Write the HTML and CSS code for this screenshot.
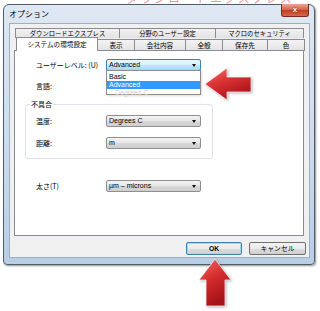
FILE: index.html
```html
<!DOCTYPE html>
<html lang="ja">
<head>
    <meta charset="UTF-8">
    <meta name="viewport" content="width=device-width, initial-scale=1.0">
    <title>オプション</title>
    <link rel="stylesheet" href="styles.css">
</head>
<body>
    <div class="bg-text">ダウンロードエクスプレス</div>

    <div class="window">
        <div class="titlebar">
            <span class="title">オプション</span>
            <span class="close">x</span>
        </div>

        <div class="client">
            <div class="tab-row back">
                <div class="tab w-dl">ダウンロードエクスプレス</div>
                <div class="tab w-user">分野のユーザー設定</div>
                <div class="tab w-macro">マクロのセキュリティ</div>
            </div>
            <div class="tab-row front">
                <div class="tab active w-sys">システムの環境設定</div>
                <div class="tab w-disp">表示</div>
                <div class="tab w-co">会社内容</div>
                <div class="tab w-gen">全般</div>
                <div class="tab w-save">保存先</div>
                <div class="tab w-color">色</div>
            </div>

            <div class="panel">
                <div class="row first">
                    <span class="label">ユーザーレベル: (U)</span>
                    <div class="combo hot">
                        Advanced
                        <div class="dropdown">
                            <div class="item">Basic</div>
                            <div class="item selected">Advanced</div>
                            <div class="item ghost">Degrees C</div>
                        </div>
                    </div>
                </div>
                <div class="row second">
                    <span class="label">言語:</span>
                    <div class="combo"></div>
                </div>

                <div class="group">
                    <span class="group-title">不具合</span>
                    <div class="row">
                        <span class="label">温度:</span>
                        <div class="combo">Degrees C</div>
                    </div>
                    <div class="row gap">
                        <span class="label">距離:</span>
                        <div class="combo">m</div>
                    </div>
                </div>

                <div class="row last">
                    <span class="label">太さ(T)</span>
                    <div class="combo">µm – microns</div>
                </div>
            </div>

            <div class="buttons">
                <div class="btn default">OK</div>
                <div class="btn">キャンセル</div>
            </div>
        </div>
    </div>

    <svg class="arrows" width="320" height="311" viewBox="0 0 320 311">
        <defs>
            <linearGradient id="red-left" x1="0" y1="0" x2="0.6" y2="1">
                <stop offset="0" stop-color="#f77b7b"/>
                <stop offset="0.45" stop-color="#dc3434"/>
                <stop offset="1" stop-color="#a8121a"/>
            </linearGradient>
            <linearGradient id="red-up" x1="0" y1="0" x2="0.4" y2="1">
                <stop offset="0" stop-color="#f26b6b"/>
                <stop offset="0.5" stop-color="#d42c2c"/>
                <stop offset="1" stop-color="#a5121a"/>
            </linearGradient>
        </defs>
        <path d="M205 84 L227 68 L227 77 L251 77 L251 92 L227 92 L227 100 Z"
              fill="url(#red-left)" stroke="#ffffff" stroke-opacity="0.7" stroke-width="1" stroke-linejoin="round"/>
        <path d="M215 259 L231 280 L225 280 L225 306 L206 306 L206 280 L199 280 Z"
              fill="url(#red-up)" stroke="#ffffff" stroke-opacity="0.7" stroke-width="1" stroke-linejoin="round"/>
    </svg>
</body>
</html>
```

FILE: styles.css
```css
body {
    margin: 0;
    padding: 4px 0 0 3px;
    width: 320px;
    height: 311px;
    box-sizing: border-box;
    background: #fff;
    position: relative;
    overflow: hidden;
    font-family: "Liberation Sans", "Noto Sans CJK JP", sans-serif;
    color: #000;
}

.bg-text {
    position: absolute;
    top: -11px;
    left: 126px;
    font-family: "Noto Sans CJK JP", sans-serif;
    font-size: 12px;
    letter-spacing: 2px;
    color: #e25a5a;
    opacity: 0.6;
}

.window {
    position: relative;
    z-index: 1;
    width: 312px;
    height: 261px;
    box-sizing: border-box;
    border: 1px solid #4f5d6d;
    border-radius: 6px 6px 4px 4px;
    background: linear-gradient(180deg, #dfe8f2, #cbdaea 60%, #b9cde4);
    padding: 0 4px 0 5px;
    box-shadow: 1px 1px 2px rgba(0, 0, 0, 0.45);
}

.titlebar {
    height: 18px;
    display: flex;
    justify-content: space-between;
    align-items: flex-start;
}

.title {
    font-family: "Noto Sans CJK JP", sans-serif;
    font-size: 8px;
    line-height: 11px;
    padding-top: 3px;
}

.close {
    margin-top: -1px;
    margin-right: 1px;
    width: 28px;
    height: 13px;
    box-sizing: border-box;
    border: 1px solid #7a2b1f;
    border-top: none;
    border-radius: 0 0 3px 3px;
    background: linear-gradient(180deg, #eaa797, #d5634a 48%, #c33d1f 52%, #d9684f);
    color: #fff;
    font-size: 8px;
    font-weight: bold;
    line-height: 11px;
    text-align: center;
    text-shadow: 0 0 2px #5a1408;
}

.client {
    height: 235px;
    box-sizing: border-box;
    border: 1px solid #9cafc5;
    background: #f0f0f0;
    padding: 4px 0 0 4px;
}

.tab-row {
    display: flex;
    align-items: flex-start;
    font-family: "Noto Sans CJK JP", sans-serif;
    font-size: 6.3px;
}

.tab-row.back {
    height: 10px;
    margin-left: 1px;
}

.tab-row.front {
    height: 12px;
    margin-left: 2px;
}

.tab {
    box-sizing: border-box;
    border: 1px solid #898c95;
    border-bottom: none;
    background: linear-gradient(180deg, #f3f3f3, #e2e2e2);
    text-align: center;
    white-space: nowrap;
    overflow: hidden;
}

.tab + .tab {
    margin-left: -1px;
}

.back .tab {
    height: 10px;
    line-height: 9px;
}

.front .tab {
    height: 12px;
    margin-top: 1px;
    line-height: 11px;
    font-size: 6.6px;
}

.front .tab.active {
    position: relative;
    z-index: 2;
    height: 14px;
    margin-top: -1px;
    background: #fff;
    line-height: 13px;
}

.w-dl { width: 105px; }
.w-user { width: 97px; }
.w-macro { width: 89px; }
.w-sys { width: 82px; }
.w-disp { width: 38px; }
.w-co { width: 52px; }
.w-gen { width: 38px; }
.w-save { width: 46px; }
.w-color { width: 38px; }

.panel {
    position: relative;
    width: 290px;
    height: 186px;
    box-sizing: border-box;
    border: 1px solid #898c95;
    background: #fff;
    padding-left: 21px;
}

.row {
    display: flex;
    align-items: center;
    height: 12px;
}

.row.first { margin-top: 8px; }
.row.second { margin-top: 9px; }
.row.gap { margin-top: 10px; }
.row.last { margin-top: 21px; }

.label {
    width: 70px;
    flex: none;
    font-family: "Noto Sans CJK JP", sans-serif;
    font-size: 7px;
    white-space: nowrap;
}

.combo {
    position: relative;
    width: 95px;
    height: 12px;
    box-sizing: border-box;
    border: 1px solid #8e8f8f;
    border-radius: 2px;
    background: linear-gradient(180deg, #f4f4f4, #e6e6e6 50%, #d8d8d8 51%, #cfcfcf);
    font-size: 7px;
    line-height: 10px;
    padding-left: 2px;
    white-space: nowrap;
}

.combo::after {
    content: "";
    position: absolute;
    right: 4px;
    top: 4px;
    border-left: 2px solid transparent;
    border-right: 2px solid transparent;
    border-top: 3px solid #111;
}

.combo.hot {
    z-index: 3;
    border-color: #3c7fb1;
    background: linear-gradient(180deg, #eaf6fd, #d9f0fc 50%, #bee6fd 51%, #a7d9f5);
}

.dropdown {
    position: absolute;
    top: 10px;
    left: -1px;
    width: 95px;
    height: 25px;
    box-sizing: border-box;
    border: 1px solid #8c8c8c;
    background: #fff;
    padding-top: 1px;
    box-shadow: 1px 1px 2px rgba(0, 0, 0, 0.15);
}

.item {
    height: 8px;
    line-height: 8px;
    padding-left: 2px;
    color: #000;
}

.item:first-child {
    height: 9px;
    line-height: 10px;
}

.item.selected {
    background: #3399ff;
    color: #fff;
}

.item.ghost {
    color: #d0d0d0;
    padding-left: 8px;
}

.group {
    position: relative;
    width: 188px;
    margin: 12px 0 0 -11px;
    box-sizing: border-box;
    border: 1px solid #dde3e8;
    border-radius: 3px;
    padding: 10px 0 9px 10px;
}

.group-title {
    position: absolute;
    top: -6px;
    left: 4px;
    padding: 0 1px;
    background: #fff;
    font-family: "Noto Sans CJK JP", sans-serif;
    font-size: 7px;
    line-height: 10px;
}

.buttons {
    display: flex;
    justify-content: flex-end;
    gap: 7px;
    margin-top: 6px;
    padding-right: 3px;
}

.btn {
    width: 57px;
    height: 13px;
    box-sizing: border-box;
    border: 1px solid #707070;
    border-radius: 2px;
    background: linear-gradient(180deg, #f2f2f2, #ebebeb 50%, #dddddd 51%, #cfcfcf);
    font-family: "Noto Sans CJK JP", sans-serif;
    font-size: 6.8px;
    line-height: 11px;
    text-align: center;
}

.btn.default {
    width: 56px;
    border-color: #3c7fb1;
    box-shadow: inset 0 0 0 1px #a7d9f5;
    font-family: "Liberation Sans", sans-serif;
    font-weight: bold;
}

.arrows {
    position: absolute;
    top: 0;
    left: 0;
    z-index: 5;
    pointer-events: none;
    filter: drop-shadow(1px 1px 1px rgba(0, 0, 0, 0.3));
}
```
